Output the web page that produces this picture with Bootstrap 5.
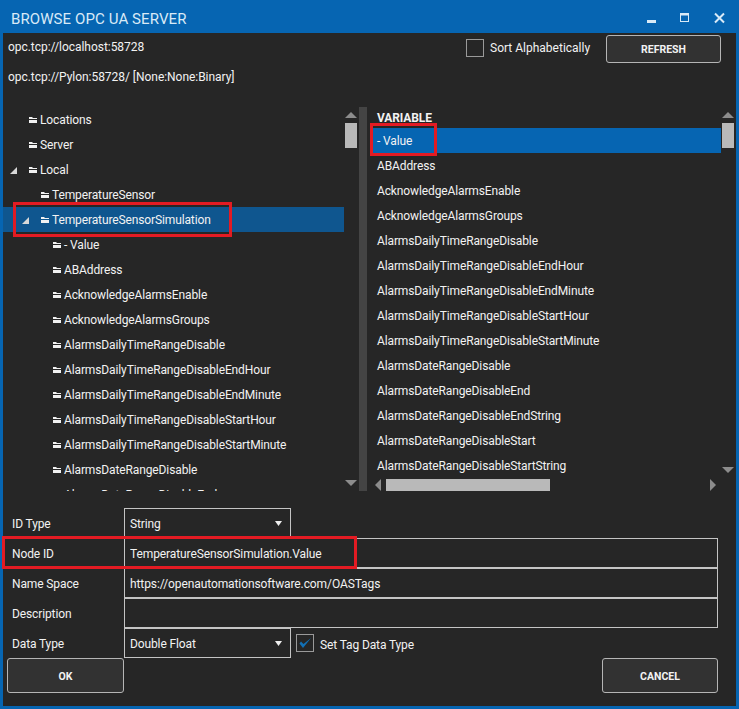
<!DOCTYPE html>
<html lang="en"><head><meta charset="utf-8"><title>Browse OPC UA Server</title>
<link href="https://cdn.jsdelivr.net/npm/bootstrap@5.3.0/dist/css/bootstrap.min.css" rel="stylesheet">
<style>
html,body{margin:0;height:709px;overflow:hidden;background:#0665b2}
body{font-family:Roboto,"Open Sans",sans-serif;font-size:12px;color:#f2f2f2;line-height:25px;letter-spacing:-.12px}
.wnd{width:739px;height:709px;display:flex;flex-direction:column;position:relative}
.ttl{height:33px;flex:none;color:#d9eaf7;font-size:15px;padding-left:11px;line-height:39px;letter-spacing:.1px}
.wbtns{position:absolute;top:0;right:0;height:33px;width:100px}
.wbtns svg{display:block;position:absolute;top:0}
.client{margin:0 3px 3px;height:673px;background:#262626;display:flex;flex-direction:column;position:relative}
.hdr{height:74px;flex:none;position:relative;display:flex;justify-content:space-between}
.urls{padding:2px 0 0 5px;letter-spacing:-.04px}
.urls div{height:30px;line-height:25px}
.sortbox{display:flex;align-items:flex-start;padding:2px 15px 0 0}
.cb{width:18px;height:18px;border:1px solid #9a9a9a;margin:4px 6px 0 0;flex:none;display:block}
.sorttxt{margin-top:1px;width:116px;letter-spacing:0}
.rbtn.btn{width:115px;height:28px;padding:1px 0 0;background:#323232;border:1px solid #b5b5b5;border-radius:3px;color:#f2f2f2;font-size:10.5px;font-weight:700;line-height:26px}
.panes{height:384px;flex:none;display:flex}
.treep{width:354px;flex:none;position:relative;overflow:hidden}
.split{width:8px;flex:none;margin-left:2px;background:#444}
.varp{width:364px;flex:none;margin-left:3px;position:relative;overflow:hidden}
.rowi{height:25px;display:flex;align-items:center;font-size:12px;white-space:nowrap;position:relative}
.list-group .rowi.list-group-item{background:transparent;color:#f2f2f2;border:0;padding:2px 0 0;border-radius:0}
.list-group .rowi.sel.list-group-item{background:#0f568f}
.varp .list-group .rowi.sel.list-group-item{background:#0665b2}
.treel{width:341px;border-radius:0}
.varl{width:351px;padding-top:21px;border-radius:0}
.varh{position:absolute;left:7px;top:-1px;font-weight:700;color:#f2f2f2}
.varl .rowi.list-group-item{padding-left:7px}
.list-group .l0.list-group-item{padding-left:26px}
.list-group .l1.list-group-item{padding-left:38px}
.list-group .l2.list-group-item{padding-left:50px}
.fold{width:8px;height:6px;margin:0 3px 1px 0;flex:none;display:block}
.exp{position:absolute;display:block;width:7px;height:7px}
.scv{position:absolute;top:0;width:12px;height:100%}
.scv .th{position:absolute;left:0;top:16px;width:12px;height:25px;background:#b9b9b9}
.scv svg{position:absolute;left:0}
.sch{position:absolute;left:0;width:352px;height:12px;top:372px}
.sch .th{position:absolute;left:16px;top:0;width:164px;height:12px;background:#b9b9b9}
.sch svg{position:absolute;top:0}
.frm{flex:none;margin-top:17px;display:grid;grid-template-columns:121px 594px;grid-auto-rows:30px}
.lbl{padding-left:9px;line-height:33px}
.fbox{border:1px solid #c4c4c4;height:30px;padding:1px 5px 0;line-height:29px;background:transparent;color:#f2f2f2;font-size:12px;border-radius:0}
.fbox.form-control{background:#262626;color:#f2f2f2;border-color:#c4c4c4;font-size:12px;letter-spacing:-.1px;padding:2px 5px 0;border-radius:0;min-height:0}
.ddrow{display:flex;align-items:center}
.dd{width:167px;flex:none;position:relative}
.dd svg{position:absolute;right:8px;top:12px}
.chk{display:flex;align-items:center;margin-left:5px}
.chk svg{margin-right:6px}
.chk span{margin-top:5px}
.foot{display:flex;justify-content:space-between;padding:0 18px 0 4px}
.abtn.btn{width:117px;height:35px;padding:2px 0 0;background:#323232;border:1px solid #b5b5b5;border-radius:3px;color:#f2f2f2;font-size:10.5px;font-weight:700}
.abtn.cnl{width:116px}
.red{position:absolute;border:3px solid #e31b23;pointer-events:none}
.r1{left:10px;top:169px;width:219px;height:35px}
.r2{left:367px;top:90px;width:67px;height:33px}
.r3{left:-1px;top:503px;width:355px;height:33px}
</style></head>
<body>
<div class="wnd">
 <div class="ttl">BROWSE OPC UA SERVER</div>
 <div class="wbtns" aria-hidden="true">
  <svg style="right:83px" width="9" height="33"><rect x="0" y="20" width="9" height="3" fill="#d9eaf7"/></svg>
  <svg style="right:50px" width="9" height="33"><rect x=".5" y="13.500" width="8" height="8" fill="none" stroke="#d9eaf7"/><rect x="0" y="13" width="9" height="2.500" fill="#d9eaf7"/></svg>
  <svg style="right:14px" width="11" height="33"><path d="M1 13.500l9 9M10 13.500l-9 9" stroke="#d9eaf7" stroke-width="2" fill="none"/></svg>
 </div>
 <div class="client">
  <div class="hdr">
   <div class="urls"><div>opc.tcp://localhost:58728</div><div>opc.tcp://Pylon:58728/ [None:None:Binary]</div></div>
   <div class="sortbox"><span class="cb"></span><span class="sorttxt">Sort Alphabetically</span><button class="btn rbtn" type="button">REFRESH</button></div>
  </div>
  <div class="panes">
   <div class="treep">
    <div class="list-group treel" id="tree"></div>
    <div class="scv" style="left:342px"><svg width="12" height="384"><path d="M0 11l6-6 6 6z" fill="#8c8c8c"/><path d="M0 373l6 6 6-6z" fill="#8c8c8c"/></svg><div class="th"></div></div>
   </div>
   <div class="split"></div>
   <div class="varp">
    <div class="varh">VARIABLE</div>
    <div class="list-group varl" id="vars"></div>
    <div class="scv" style="left:352px"><svg width="12" height="372"><path d="M0 11l6-6 6 6z" fill="#8c8c8c"/><path d="M0 360l6 6 6-6z" fill="#8c8c8c"/></svg><div class="th"></div></div>
    <div class="sch"><svg style="left:5px" width="7" height="12"><path d="M6 0v12L0 6z" fill="#8c8c8c"/></svg><div class="th"></div><svg style="left:340px" width="7" height="12"><path d="M0 0v12l6-6z" fill="#8c8c8c"/></svg></div>
   </div>
  </div>
  <div class="frm">
   <div class="lbl">ID Type</div><div class="ddrow"><div class="fbox dd">String<svg width="7" height="5"><path d="M0 0h7L3.500 5z" fill="#eee"/></svg></div></div>
   <div class="lbl">Node ID</div><input class="form-control fbox" value="TemperatureSensorSimulation.Value">
   <div class="lbl">Name Space</div><input class="form-control fbox" value="https://openautomationsoftware.com/OASTags">
   <div class="lbl">Description</div><input class="form-control fbox" value="">
   <div class="lbl">Data Type</div><div class="ddrow"><div class="fbox dd">Double Float<svg width="7" height="5"><path d="M0 0h7L3.500 5z" fill="#eee"/></svg></div>
    <div class="chk"><svg width="18" height="18"><rect x=".5" y=".5" width="17" height="17" fill="none" stroke="#9a9a9a"/><path d="M3.500 9.500L7 14 15 4 7.500 10 5 7.500z" fill="#1270b5"/></svg><span>Set Tag Data Type</span></div></div>
  </div>
  <div class="foot"><button class="btn abtn" type="button">OK</button><button class="btn abtn cnl" type="button">CANCEL</button></div>
  <div class="red r1"></div><div class="red r2"></div><div class="red r3"></div>
 </div>
</div>
<script>
var F='<svg class="fold" viewBox="0 0 8 6"><path d="M0 0h3l1 1h4v1H0zM0 3h8v3H0z" fill="#f2f2f2"/></svg>';
var E=function(x){return '<svg class="exp" style="left:'+x+'px" viewBox="0 0 7 7"><path d="M7 0v7H0z" fill="#d8d8d8"/></svg>'};
var names=["- Value","ABAddress","AcknowledgeAlarmsEnable","AcknowledgeAlarmsGroups","AlarmsDailyTimeRangeDisable","AlarmsDailyTimeRangeDisableEndHour","AlarmsDailyTimeRangeDisableEndMinute","AlarmsDailyTimeRangeDisableStartHour","AlarmsDailyTimeRangeDisableStartMinute","AlarmsDateRangeDisable"];
var t=[[0,"Locations"],[0,"Server"],[0,"Local",7],[1,"TemperatureSensor"],[1,"TemperatureSensorSimulation",19,1]];
names.forEach(function(n){t.push([2,n])});t.push([2,"AlarmsDateRangeDisableEnd"]);
document.getElementById('tree').innerHTML=t.map(function(r){return '<div class="list-group-item rowi l'+r[0]+(r[3]?' sel':'')+'">'+(r[2]?E(r[2]):'')+F+r[1]+'</div>'}).join('');
var v=names.concat(["AlarmsDateRangeDisableEnd","AlarmsDateRangeDisableEndString","AlarmsDateRangeDisableStart","AlarmsDateRangeDisableStartString"]);
document.getElementById('vars').innerHTML=v.map(function(n,i){return '<div class="list-group-item rowi'+(i==0?' sel':'')+'">'+n+'</div>'}).join('');
</script>
</body></html>
